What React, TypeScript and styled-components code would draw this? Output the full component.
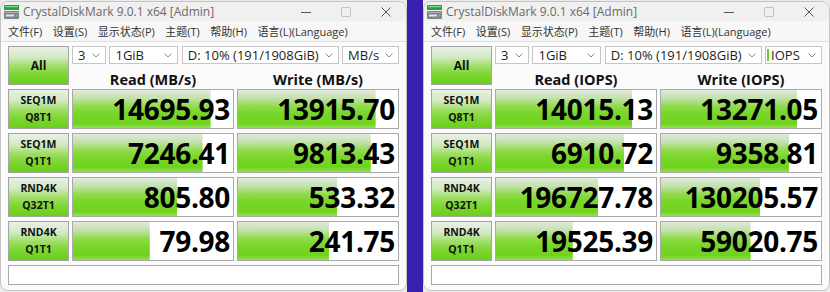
import styled, { createGlobalStyle } from "styled-components";

const GlobalStyle = createGlobalStyle`
  html, body {
    margin: 0;
    padding: 0;
  }
  body {
    width: 830px;
    height: 292px;
    overflow: hidden;
    background: #ebebeb;
    font-family: "Open Sans", "Noto Sans CJK SC", sans-serif;
  }
`;

const Desktop = styled.div`
  display: flex;
  height: 292px;
`;

const Divider = styled.div`
  width: 16px;
  background: #3a1fae;
`;

const Window = styled.div`
  width: 405px;
  height: 288px;
  margin-top: 1px;
  border: 1px solid #c4c4c4;
  border-radius: 8px;
  background: #fbfbfb;
  overflow: hidden;
  display: flex;
  flex-direction: column;
`;

const TitleBar = styled.div`
  height: 19px;
  display: flex;
  align-items: center;
  padding-left: 3px;
  background: #f0f0f0;
`;

const TitleText = styled.span`
  margin-left: 4px;
  font-size: 12px;
  color: #6a6a6a;
  flex: 1;
  white-space: nowrap;
`;

const Controls = styled.div`
  display: flex;
`;

const ControlButton = styled.div`
  width: 40px;
  height: 19px;
  display: flex;
  align-items: center;
  justify-content: center;
`;

const MenuBar = styled.div`
  height: 20px;
  display: flex;
  align-items: center;
  gap: 10.5px;
  padding-left: 7px;
  background: #f7f7f7;
  border-bottom: 1px solid #dedede;
`;

const MenuItem = styled.span`
  font-size: 11px;
  color: #333;
  white-space: nowrap;
`;

const Panel = styled.div`
  display: grid;
  grid-template-columns: 61px 162px 162px;
  grid-template-rows: 39px repeat(4, 40px) 20px;
  column-gap: 3px;
  row-gap: 4px;
  padding: 4px 7px 0;
`;

const greenFace = `linear-gradient(180deg, #eaf0e7 0%, #d2eac2 28%, #9fde66 52%, #7bd52e 76%, #6bcf1a 100%)`;

const AllButton = styled.div`
  box-sizing: border-box;
  border: 1px solid #a4a4a4;
  background: ${greenFace};
  display: flex;
  align-items: center;
  justify-content: center;
  font-weight: 700;
  font-size: 12px;
  color: #111;
`;

const TopRight = styled.div`
  grid-column: span 2;
  display: flex;
  flex-direction: column;
`;

const SelectRow = styled.div`
  display: flex;
  gap: 3.5px;
  height: 18px;
  flex: none;
`;

const Select = styled.div<{ $w: number }>`
  position: relative;
  width: ${(p) => p.$w}px;
  box-sizing: border-box;
  border: 1px solid #c6c6c6;
  background: #fff;
  display: flex;
  align-items: center;
  justify-content: space-between;
  padding: 0 5px;
  font-size: 13px;
  color: #1e1e1e;
  white-space: nowrap;
`;

const Accent = styled.span`
  position: absolute;
  left: 1px;
  top: 2px;
  bottom: 2px;
  width: 2px;
  background: #62d12a;
`;

const Headers = styled.div`
  display: grid;
  grid-template-columns: 162px 162px;
  column-gap: 3px;
  align-items: start;
  padding-top: 8px;
`;

const Header = styled.div`
  text-align: center;
  font-weight: 700;
  font-size: 14.5px;
  line-height: 16px;
  color: #111;
`;

const Label = styled.div`
  box-sizing: border-box;
  border: 1px solid #a4a4a4;
  background: ${greenFace};
  display: flex;
  flex-direction: column;
  align-items: center;
  justify-content: center;
  font-weight: 700;
  font-size: 10.5px;
  line-height: 17px;
  color: #111;
`;

const Cell = styled.div`
  box-sizing: border-box;
  border: 1px solid #a9a9a9;
  background-color: #fff;
  background-image: linear-gradient(180deg, #e2e8de 0%, #c6e2b2 20%, #8edb48 44%, #78d628 62%, #71d31e 88%, #93e152 100%);
  background-repeat: no-repeat;
  display: flex;
  align-items: center;
  justify-content: flex-end;
  padding-right: 3px;
  font-weight: 700;
  font-size: 28px;
  letter-spacing: -0.3px;
  color: #000;
  overflow: hidden;
`;

const StatusBar = styled.div`
  grid-column: span 3;
  box-sizing: border-box;
  border: 1px solid #a9a9a9;
  background: #fff;
`;

const Chevron = () => (
  <svg width="8" height="5" viewBox="0 0 8 5">
    <path d="M0.5 0.5 L4 4 L7.5 0.5" fill="none" stroke="#8a8a8a" strokeWidth="1" />
  </svg>
);

const AppIcon = () => (
  <svg width="15" height="14" viewBox="0 0 15 14">
    <rect x="0" y="0" width="15" height="5" fill="#27a243" />
    <rect x="1" y="1" width="13" height="1.2" fill="#7fdc8d" />
    <rect x="0" y="6" width="15" height="8" rx="1" fill="#7e858b" />
    <rect x="1" y="7" width="13" height="1" fill="#a9aeb2" />
    <rect x="2" y="9.5" width="8" height="2" fill="#e6e6e6" />
    <rect x="11.5" y="9.5" width="2" height="2" fill="#5ad36a" />
  </svg>
);

const MinimizeIcon = () => (
  <svg width="10" height="10" viewBox="0 0 10 10">
    <path d="M0 5.5 H10" stroke="#555" strokeWidth="1" />
  </svg>
);

const MaximizeIcon = () => (
  <svg width="10" height="10" viewBox="0 0 10 10">
    <rect x="0.5" y="0.5" width="9" height="9" rx="1" fill="none" stroke="#c2c2c2" strokeWidth="1" />
  </svg>
);

const CloseIcon = () => (
  <svg width="10" height="10" viewBox="0 0 10 10">
    <path d="M0.5 0.5 L9.5 9.5 M9.5 0.5 L0.5 9.5" stroke="#555" strokeWidth="1" />
  </svg>
);

interface IRow {
  name: string;
  sub: string;
  read: string;
  write: string;
  readPct: number;
  writePct: number;
}

interface IBench {
  unit: string;
  readHeader: string;
  writeHeader: string;
  accent?: boolean;
  rows: IRow[];
}

const menus = ["文件(F)", "设置(S)", "显示状态(P)", "主题(T)", "帮助(H)", "语言(L)(Language)"];

const benches: IBench[] = [
  {
    unit: "MB/s",
    readHeader: "Read (MB/s)",
    writeHeader: "Write (MB/s)",
    rows: [
      { name: "SEQ1M", sub: "Q8T1", read: "14695.93", write: "13915.70", readPct: 86, writePct: 86 },
      { name: "SEQ1M", sub: "Q1T1", read: "7246.41", write: "9813.43", readPct: 81, writePct: 83 },
      { name: "RND4K", sub: "Q32T1", read: "805.80", write: "533.32", readPct: 65, writePct: 62 },
      { name: "RND4K", sub: "Q1T1", read: "79.98", write: "241.75", readPct: 48, writePct: 57 },
    ],
  },
  {
    unit: "IOPS",
    readHeader: "Read (IOPS)",
    writeHeader: "Write (IOPS)",
    accent: true,
    rows: [
      { name: "SEQ1M", sub: "Q8T1", read: "14015.13", write: "13271.05", readPct: 85, writePct: 85 },
      { name: "SEQ1M", sub: "Q1T1", read: "6910.72", write: "9358.81", readPct: 80, writePct: 80 },
      { name: "RND4K", sub: "Q32T1", read: "196727.78", write: "130205.57", readPct: 64, writePct: 62 },
      { name: "RND4K", sub: "Q1T1", read: "19525.39", write: "59020.75", readPct: 48, writePct: 56 },
    ],
  },
];

function DiskMarkWindow({ bench }: { bench: IBench }) {
  return (
    <Window>
      <TitleBar>
        <AppIcon />
        <TitleText>CrystalDiskMark 9.0.1 x64 [Admin]</TitleText>
        <Controls>
          <ControlButton>
            <MinimizeIcon />
          </ControlButton>
          <ControlButton>
            <MaximizeIcon />
          </ControlButton>
          <ControlButton>
            <CloseIcon />
          </ControlButton>
        </Controls>
      </TitleBar>
      <MenuBar>
        {menus.map((m) => (
          <MenuItem key={m}>{m}</MenuItem>
        ))}
      </MenuBar>
      <Panel>
        <AllButton>All</AllButton>
        <TopRight>
          <SelectRow>
            <Select $w={34}>
              3 <Chevron />
            </Select>
            <Select $w={69}>
              1GiB <Chevron />
            </Select>
            <Select $w={157}>
              D: 10% (191/1908GiB) <Chevron />
            </Select>
            <Select $w={57}>
              {bench.accent && <Accent />}
              {bench.unit} <Chevron />
            </Select>
          </SelectRow>
          <Headers>
            <Header>{bench.readHeader}</Header>
            <Header>{bench.writeHeader}</Header>
          </Headers>
        </TopRight>
        {bench.rows.map((r, i) => (
          <>
            <Label key={`l${i}`}>
              <span>{r.name}</span>
              <span>{r.sub}</span>
            </Label>
            <Cell key={`r${i}`} style={{ backgroundSize: `${r.readPct}% 100%` }}>
              {r.read}
            </Cell>
            <Cell key={`w${i}`} style={{ backgroundSize: `${r.writePct}% 100%` }}>
              {r.write}
            </Cell>
          </>
        ))}
        <StatusBar />
      </Panel>
    </Window>
  );
}

export default function App() {
  return (
    <>
      <GlobalStyle />
      <Desktop>
        <DiskMarkWindow bench={benches[0]} />
        <Divider />
        <DiskMarkWindow bench={benches[1]} />
      </Desktop>
    </>
  );
}
